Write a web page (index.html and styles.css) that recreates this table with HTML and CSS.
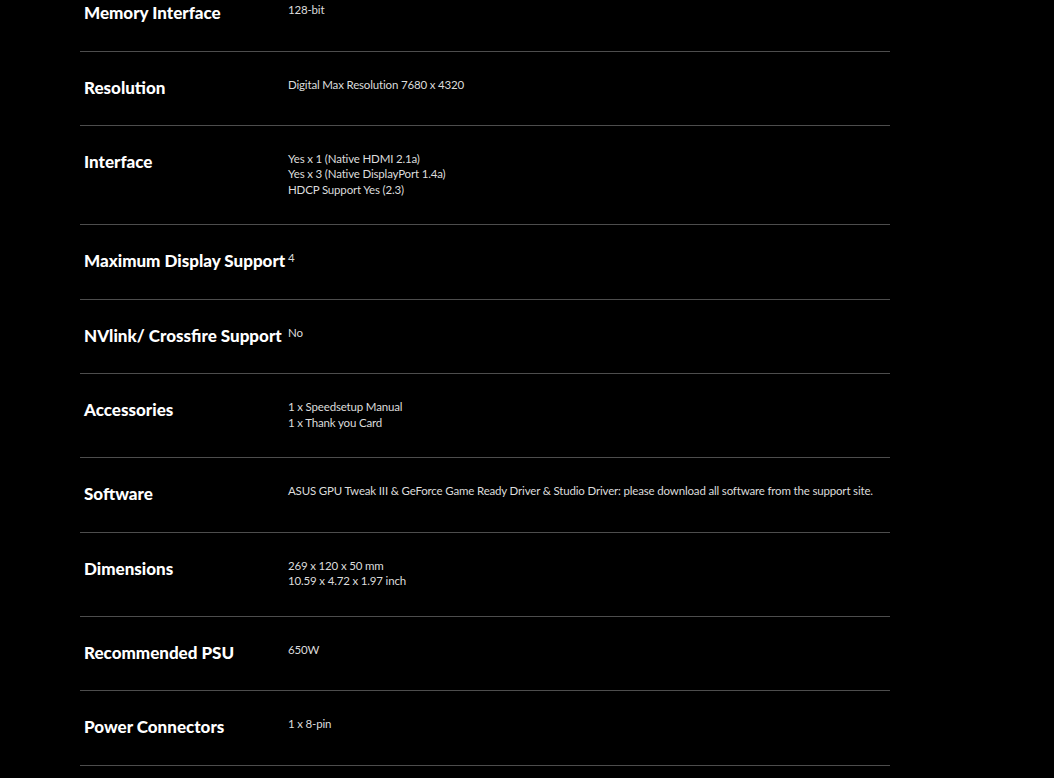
FILE: index.html
```html
<!DOCTYPE html>
<html>
<head>
<meta charset="utf-8">
<link rel="stylesheet" href="styles.css">
</head>
<body>
<div class="specs">
  <div class="row"><div class="label">Memory Interface</div><div class="value"><p>128-bit</p></div></div>
  <div class="row"><div class="label">Resolution</div><div class="value"><p>Digital Max Resolution 7680 x 4320</p></div></div>
  <div class="row"><div class="label">Interface</div><div class="value"><p>Yes x 1 (Native HDMI 2.1a)</p><p>Yes x 3 (Native DisplayPort 1.4a)</p><p>HDCP Support Yes (2.3)</p></div></div>
  <div class="row"><div class="label">Maximum Display Support</div><div class="value"><p>4</p></div></div>
  <div class="row"><div class="label">NVlink/ Crossfire Support</div><div class="value"><p>No</p></div></div>
  <div class="row"><div class="label">Accessories</div><div class="value"><p>1 x Speedsetup Manual</p><p>1 x Thank you Card</p></div></div>
  <div class="row"><div class="label">Software</div><div class="value"><p>ASUS GPU Tweak III &amp; GeForce Game Ready Driver &amp; Studio Driver: please download all software from the support site.</p></div></div>
  <div class="row"><div class="label">Dimensions</div><div class="value"><p>269 x 120 x 50 mm</p><p>10.59 x 4.72 x 1.97 inch</p></div></div>
  <div class="row"><div class="label">Recommended PSU</div><div class="value"><p>650W</p></div></div>
  <div class="row"><div class="label">Power Connectors</div><div class="value"><p>1 x 8-pin</p></div></div>
</div>
</body>
</html>
```

FILE: styles.css
```css
html, body {
  margin: 0;
  padding: 0;
  background: #000;
  height: 100%;
  overflow: hidden;
}
.specs {
  width: 810px;
  margin: -23px 0 0 80px;
}
.row {
  display: flex;
  align-items: flex-start;
  padding: 25px 0 27.5px 4px;
  border-bottom: 1px solid #4d4d4d;
}
.label {
  width: 204px;
  flex: none;
  font-family: "Lato", sans-serif;
  font-weight: 900;
  font-size: 17px;
  line-height: 20px;
  color: #fff;
  padding-top: 1px;
  white-space: nowrap;
}
.value {
  flex: 1;
  font-family: "Lato", sans-serif;
  font-size: 11.5px;
  line-height: 15.25px;
  color: #dcdcdc;
  letter-spacing: -0.17px;
  white-space: nowrap;
}
.value p {
  margin: 0;
}
```
